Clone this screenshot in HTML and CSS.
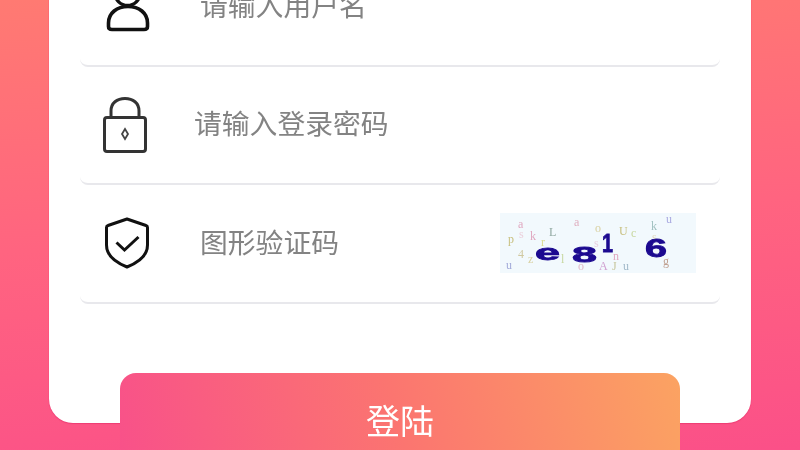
FILE: index.html
```html
<!DOCTYPE html>
<html lang="zh">
<head>
<meta charset="utf-8">
<title>登陆</title>
<link rel="stylesheet" href="styles.css">
</head>
<body>
<main class="page">
  <section class="card">
    <div class="row">
      <svg class="icon icon-user" viewBox="0 1 44 56" aria-hidden="true">
        <circle cx="21.500" cy="16" r="12.500" fill="none" stroke="#111" stroke-width="3.400"/>
        <path d="M6 52.500h32c2 0 3.500-1 3.500-3V46C41.500 36 33 29.500 22 29.500S2.500 36 2.500 46v3.500c0 2 1.500 3 3.500 3z" fill="#fff" stroke="#111" stroke-width="3.600" stroke-linejoin="round"/>
      </svg>
      <span class="hint hint-user">请输入用户名</span>
    </div>
    <div class="row">
      <svg class="icon icon-lock" viewBox="0 0 44 56" aria-hidden="true">
        <path d="M8 21V14C8 6 14 1.500 22 1.500S36 6 36 14v7" fill="none" stroke="#333" stroke-width="3"/>
        <rect x="1.500" y="20.500" width="41" height="34" rx="2.500" fill="none" stroke="#333" stroke-width="3"/>
        <path d="M22 32l3 5-3 5-3-5z" fill="none" stroke="#444" stroke-width="1.800"/>
      </svg>
      <span class="hint hint-pass">请输入登录密码</span>
    </div>
    <div class="row">
      <svg class="icon icon-shield" viewBox="0 0 46 52" aria-hidden="true">
        <path d="M23 2l19 6.500c1 .3 1.500 1 1.500 2V28c0 10-8 17-20.500 22C10.500 45 2.500 38 2.500 28V10.500c0-1 .5-1.700 1.500-2z" fill="none" stroke="#111" stroke-width="3" stroke-linejoin="round"/>
        <path d="M12.500 25.500l8 7.500 14-13" fill="none" stroke="#111" stroke-width="3"/>
      </svg>
      <span class="hint hint-code">图形验证码</span>
      <svg class="captcha" viewBox="0 0 196 60" aria-hidden="true">
        <rect width="196" height="60" fill="#f2f9fd"/>
        <g class="noise">
          <text x="18" y="15" fill="#e0a8c0">a</text>
          <text x="19" y="25" fill="#ecd0dc">s</text>
          <text x="8" y="30" fill="#c8c080">p</text>
          <text x="30" y="27" fill="#e0a8c0">k</text>
          <text x="49" y="23" fill="#90a8a0">L</text>
          <text x="18" y="45" fill="#d0c8a0">4</text>
          <text x="28" y="50" fill="#d8d0a0">z</text>
          <text x="41" y="33" fill="#dcdc90">r</text>
          <text x="61" y="50" fill="#c8d8a0">l</text>
          <text x="6" y="56" fill="#a0a8d8">u</text>
          <text x="74" y="13" fill="#e0b0c0">a</text>
          <text x="78" y="57" fill="#e0b8c8">o</text>
          <text x="95" y="19" fill="#d8d0a0">o</text>
          <text x="94" y="34" fill="#e8d0e0">s</text>
          <text x="119" y="22" fill="#c8c080">U</text>
          <text x="131" y="24" fill="#c8d8a0">c</text>
          <text x="151" y="17" fill="#a0c0c0">k</text>
          <text x="152" y="28" fill="#e0d8c0">s</text>
          <text x="166" y="10" fill="#a8a8e0">u</text>
          <text x="113" y="47" fill="#e0a8c0">n</text>
          <text x="99" y="57" fill="#d0a0d0">A</text>
          <text x="112" y="57" fill="#c8c8a0">J</text>
          <text x="123" y="57" fill="#a0b8c8">u</text>
          <text x="163" y="52" fill="#c0a090">g</text>
        </g>
        <g class="main">
          <text x="35" y="47" textLength="25" lengthAdjust="spacingAndGlyphs">e</text>
          <text x="72" y="49" textLength="25" lengthAdjust="spacingAndGlyphs">8</text>
          <text class="tall" x="102" y="39" textLength="11" lengthAdjust="spacingAndGlyphs">1</text>
          <text class="tall" x="145" y="44" textLength="22" lengthAdjust="spacingAndGlyphs">6</text>
        </g>
      </svg>
    </div>
  </section>
  <button class="submit" type="button">登陆</button>
</main>
</body>
</html>
```
FILE: styles.css
```css
html, body {
  margin: 0;
  height: 100%;
  overflow: hidden;
}

.page {
  height: 450px;
  overflow: hidden;
  padding: 0 49px;
  box-sizing: border-box;
  background: linear-gradient(176deg, #ff7a72 0%, #ff6480 50%, #fb5088 100%);
  font-family: "Noto Sans CJK SC", "Liberation Sans", sans-serif;
  filter: blur(0.6px);
}

.card {
  margin-top: -52px;
  height: 475px;
  padding: 0 31px;
  background: #fff;
  border-radius: 24px;
  box-shadow: 0 1px 1px #ee3d74, 0 0 1px #ee3d74;
}

.row {
  box-sizing: border-box;
  height: 118.500px;
  display: flex;
  align-items: center;
  border-bottom: 2px solid #e8e8ec;
  border-radius: 0 0 8px 8px;
}

.icon {
  flex: none;
}

.icon-user {
  width: 44px;
  height: 56px;
  margin-left: 26px;
}

.icon-lock {
  width: 44px;
  height: 56px;
  margin-left: 23px;
}

.icon-shield {
  width: 46px;
  height: 52px;
  margin-left: 24px;
}

.hint {
  margin-bottom: 3px;
  font-size: 27.800px;
  line-height: 1;
  color: #838383;
  white-space: nowrap;
}

.hint-user {
  margin-left: 50px;
}

.hint-pass {
  margin-left: 47px;
}

.hint-code {
  margin-left: 50px;
}

.captcha {
  width: 196px;
  height: 60px;
  margin: 0 24px 0 auto;
  filter: blur(0.5px);
}

.noise text {
  font: 12px "Liberation Serif", serif;
}

.main text {
  font: bold 22px "Liberation Sans", sans-serif;
  fill: #1c0a90;
  stroke: #1c0a90;
  stroke-width: 0.800px;
}

.main .tall {
  font-size: 25px;
}

.submit {
  display: block;
  width: 560px;
  height: 110px;
  margin: -50px auto 0;
  padding: 0 0 16px;
  border: 0;
  border-radius: 16px 16px 0 0;
  position: relative;
  background: linear-gradient(75deg, #f8508a 0%, #fb7570 50%, #fba362 100%);
  color: #fff;
  font-family: inherit;
  font-size: 34px;
  line-height: 1;
}
```
